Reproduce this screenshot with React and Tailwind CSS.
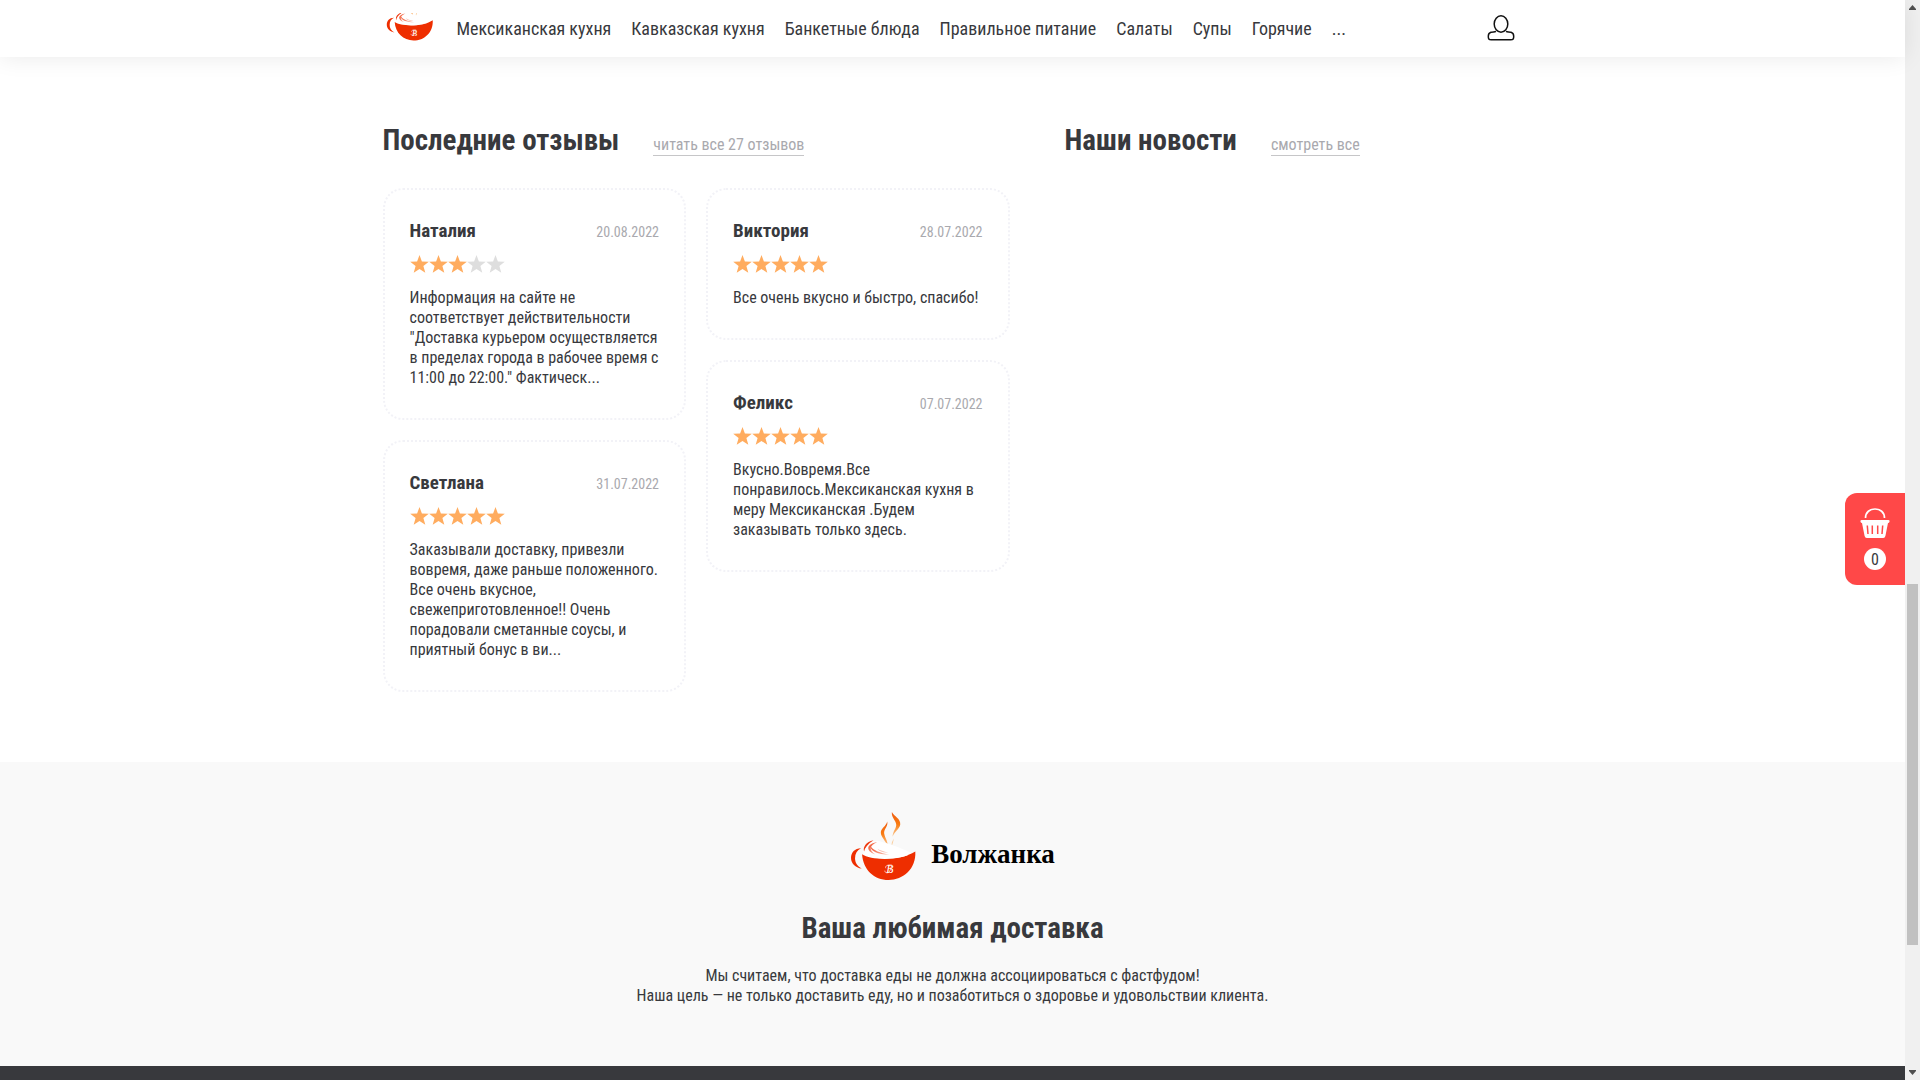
const NAV = [
  "Мексиканская кухня",
  "Кавказская кухня",
  "Банкетные блюда",
  "Правильное питание",
  "Салаты",
  "Супы",
  "Горячие",
  "...",
];

const REVIEWS = [
  [
    {
      name: "Наталия",
      date: "20.08.2022",
      stars: 3,
      text: 'Информация на сайте не соответствует действительности "Доставка курьером осуществляется в пределах города в рабочее время с 11:00 до 22:00." Фактическ...',
    },
    {
      name: "Светлана",
      date: "31.07.2022",
      stars: 5,
      text: "Заказывали доставку, привезли вовремя, даже раньше положенного. Все очень вкусное, свежеприготовленное!! Очень порадовали сметанные соусы, и приятный бонус в ви...",
    },
  ],
  [
    {
      name: "Виктория",
      date: "28.07.2022",
      stars: 5,
      text: "Все очень вкусно и быстро, спасибо!",
    },
    {
      name: "Феликс",
      date: "07.07.2022",
      stars: 5,
      text: "Вкусно.Вовремя.Все понравилось.Мексиканская кухня в меру Мексиканская .Будем заказывать только здесь.",
    },
  ],
];

function Cup({ className, viewBox }) {
  return (
    <svg className={className} viewBox={viewBox} aria-hidden="true">
      <defs>
        <linearGradient id="steam" x1="0" y1="0" x2="0" y2="1">
          <stop offset="0" stopColor="#ee5a10" />
          <stop offset="0.5" stopColor="#f97c12" />
          <stop offset="1" stopColor="#fbcf9e" />
        </linearGradient>
        <linearGradient id="swirl" x1="0" y1="0" x2="1" y2="1">
          <stop offset="0" stopColor="#f04a22" />
          <stop offset="1" stopColor="#f9c4b6" />
        </linearGradient>
      </defs>
      <path d="M185 66C191 79 212 86 210 103C208 117 193 123 187 140C187 124 199 114 198 103C197 91 183 83 185 66Z" fill="url(#steam)" />
      <path d="M171 94C175 109 160 116 162 130C164 143 174 154 173 170C169 154 151 142 152 126C153 114 168 108 171 94Z" fill="url(#steam)" />
      <path d="M185 166C183 159 186 153 191 145C189 154 188 160 185 166Z" fill="#fbcf9e" />
      <path d="M100 180C102 160 120 154 142 152C170 158 230 180 244 190C225 208 130 214 100 192Z" fill="#fff" />
      <path d="M93 174C74 174 63 187 63 203C63 219 76 232 95 235C81 227 75 217 75 204C75 190 81 180 93 174Z" fill="#ee2e00" />
      <path d="M130 150C108 155 98 170 102 184C104 173 113 161 130 150Z" fill="#ee3a10" />
      <path d="M141 156C110 160 104 181 136 193C116 180 117 166 141 156Z" fill="url(#swirl)" />
      <path d="M122 169C121 183 142 193 178 193C149 188 130 181 122 169Z" fill="url(#swirl)" />
      <path d="M142 176C148 185 160 188 174 187C159 184 151 181 142 176Z" fill="#f9bdae" />
      <path d="M96 192C122 210 208 214 255 184C258 236 219 269 175 269C132 269 99 238 96 192Z" fill="#ee2e00" />
      <path d="M106 192C132 206 200 207 232 194" fill="none" stroke="#fff" strokeWidth="3" />
      <text x="179" y="249" textAnchor="middle" fontFamily="Liberation Serif, serif" fontStyle="italic" fontSize="35" fill="#fff">
        В
      </text>
      <path d="M164 241C164 250 176 249 179 242L184 227M167 234C163 226 176 222 186 225" fill="none" stroke="#fff" strokeWidth="2" />
    </svg>
  );
}

function UserIcon() {
  return (
    <svg className="h-[26px] w-7" viewBox="0 0 28 26" fill="none" stroke="#111" strokeWidth="1.5" aria-hidden="true">
      <ellipse cx="14" cy="9" rx="6.8" ry="8.2" />
      <path d="M9 16.400C7.500 17.200 6 16.700 4 17.300C2 18 1.400 19.300 1.300 21C1.200 23.900 1.800 24.800 4.200 24.800H23.800C26.200 24.800 26.800 23.900 26.700 21C26.600 19.300 26 18 24 17.300C22 16.700 20.500 17.200 19 16.400" />
    </svg>
  );
}

function BasketIcon() {
  return (
    <svg className="h-[30px] w-[30px]" viewBox="0 0 30 30" aria-hidden="true">
      <path d="M5.500 10C5.500 4 10 1 15 1S24.500 4 24.500 10" fill="none" stroke="#fff" strokeWidth="1.700" />
      <path d="M1.500 12H28.500Q30 12 29.500 13.700Q29.200 15 28 15L25.400 28Q25 30 23.200 30H6.800Q5 30 4.600 28L2 15Q.8 15 .5 13.700Q0 12 1.500 12Z" fill="#fff" />
      <path d="M7.300 17.500L8 26M12.300 17.500V26M17.700 17.500V26M22.700 17.500L22 26" fill="none" stroke="#ff4848" strokeWidth="1.500" />
    </svg>
  );
}

function Stars({ count }) {
  return (
    <div className="flex" role="img" aria-label={`Оценка ${count} из 5`}>
      {[1, 2, 3, 4, 5].map((n) => (
        <svg key={n} className={n <= count ? "h-[18px] w-[19px] fill-[#ffac5f]" : "h-[18px] w-[19px] fill-[#dedede]"} viewBox="0 0 19 18">
          <path d="M9.500 0L11.900 6.500L18.800 6.800L13.400 11.100L15.300 17.800L9.500 14L3.700 17.800L5.600 11.100L.2 6.800L7.100 6.500Z" />
        </svg>
      ))}
    </div>
  );
}

function Review({ review }) {
  return (
    <article className="rounded-[20px] border-2 border-dotted border-[#f2f2f7] px-[25px] pt-[29px] pb-[30px]">
      <div className="flex items-baseline justify-between leading-6">
        <h3 className="text-[19px] leading-6 font-bold">{review.name}</h3>
        <time className="text-sm text-[#a9a9ae]">{review.date}</time>
      </div>
      <div className="mt-3 mb-[15px]">
        <Stars count={review.stars} />
      </div>
      <p>{review.text}</p>
    </article>
  );
}

function Heading({ title, link }) {
  return (
    <div className="flex items-baseline gap-[34px]">
      <h2 className="text-[29px] leading-9 font-bold">{title}</h2>
      <a href="#all" className="border-b border-[#c6c6c8] text-[#a9a9ae]">
        {link}
      </a>
    </div>
  );
}

function Scrollbar() {
  return (
    <div className="flex w-[15px] shrink-0 flex-col items-center justify-between bg-[#f0f0f0] py-[5px]" aria-hidden="true">
      <svg className="h-[5px] w-[7px] fill-[#505050]" viewBox="0 0 7 5">
        <path d="M3.500 0L7 4V5H0V4Z" />
      </svg>
      <div className="flex w-[11px] flex-1 flex-col">
        <div className="flex-[574]" />
        <div className="flex-[361] bg-[#c1c1c1]" />
        <div className="flex-[125]" />
      </div>
      <svg className="h-[5px] w-[7px] fill-[#505050]" viewBox="0 0 7 5">
        <path d="M3.500 5L7 1V0H0V1Z" />
      </svg>
    </div>
  );
}

export default function App() {
  return (
    <div className="flex min-h-screen bg-white font-['Roboto_Condensed','Roboto',sans-serif] text-base leading-5 text-[#38393d]">
      <div className="relative flex min-w-0 flex-1 flex-col">
        <header className="bg-white shadow-[0_0_25px_rgba(0,0,0,0.09)]">
          <div className="mx-auto flex h-[57px] max-w-[1140px] items-center justify-between">
            <div className="flex items-center">
              <a href="#home" aria-label="Волжанка" className="ml-[3px] pb-1">
                <Cup className="h-7 w-12" viewBox="60 154 200 117" />
              </a>
              <nav className="ml-[23px] flex gap-5 text-lg">
                {NAV.map((item) => (
                  <a key={item} href="#menu">
                    {item}
                  </a>
                ))}
              </nav>
            </div>
            <button type="button" aria-label="Личный кабинет" className="mr-2 pb-0.5">
              <UserIcon />
            </button>
          </div>
        </header>

        <main className="flex flex-1 flex-col">
          <div className="mx-auto flex w-full max-w-[1140px] grow pt-[65px] pb-[70px]">
            <section className="w-[682px]">
              <Heading title="Последние отзывы" link="читать все 27 отзывов" />
              <div className="mt-[30px] mr-[55px] grid grid-cols-2 items-start gap-5">
                {REVIEWS.map((column) => (
                  <div key={column[0].name} className="grid gap-5">
                    {column.map((review) => (
                      <Review key={review.name} review={review} />
                    ))}
                  </div>
                ))}
              </div>
            </section>
            <section>
              <Heading title="Наши новости" link="смотреть все" />
            </section>
          </div>

          <section className="flex flex-col items-center bg-[#f9f9f9] pt-12 pb-[60px] text-center">
            <div className="flex items-center gap-[14px]">
              <Cup className="h-[72px] w-[67px]" viewBox="60 60 200 215" />
              <span className="pt-4 font-['Liberation_Serif',serif] text-[27px] leading-8 font-bold text-black">Волжанка</span>
            </div>
            <h2 className="mt-7 text-[29px] leading-9 font-bold">Ваша любимая доставка</h2>
            <p className="mt-5">
              Мы считаем, что доставка еды не должна ассоциироваться с фастфудом!
              <br />
              Наша цель — не только доставить еду, но и позаботиться о здоровье и удовольствии клиента.
            </p>
          </section>
        </main>

        <footer className="h-[14px] bg-[#38393d]" />

        <button
          type="button"
          aria-label="Корзина"
          className="absolute top-[493px] right-0 flex w-[60px] flex-col items-center gap-[10px] rounded-l-xl bg-[#ff4848] py-[15px]"
        >
          <BasketIcon />
          <span className="flex h-[22px] w-[22px] items-center justify-center rounded-full bg-white pt-0.5 leading-5">0</span>
        </button>
      </div>
      <Scrollbar />
    </div>
  );
}
